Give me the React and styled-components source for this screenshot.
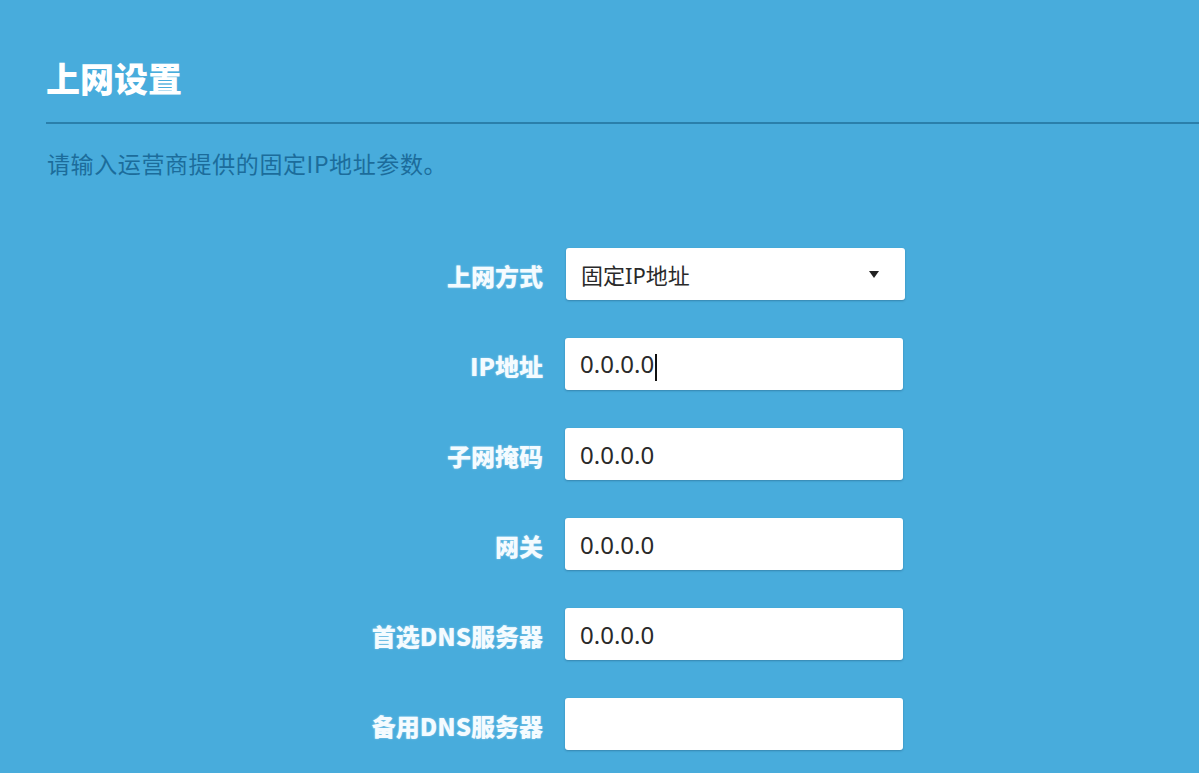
import React from "react";
import styled, { createGlobalStyle } from "styled-components";

const GlobalStyle = createGlobalStyle`
  html, body {
    margin: 0;
    padding: 0;
    background: #48acdc;
  }
  body {
    font-family: "Noto Sans", "Noto Sans CJK SC", sans-serif;
  }
`;

const Page = styled.div`
  width: 1199px;
  height: 773px;
  overflow: hidden;
  background: #48acdc;
  padding: 1px 0 0 46px;
  box-sizing: border-box;
`;

const Title = styled.h1`
  margin: 53px 0 0;
  font-family: "Noto Sans CJK SC", sans-serif;
  font-size: 34px;
  font-weight: 900;
  line-height: 48px;
  color: #ffffff;
`;

const Divider = styled.div`
  height: 2px;
  margin-top: 20px;
  background: #2a7fab;
`;

const Hint = styled.p`
  margin: 23px 0 0 1px;
  font-family: "Noto Sans CJK SC", sans-serif;
  font-size: 23px;
  line-height: 32px;
  color: #1c6c9b;
  letter-spacing: 0.6px;
`;

const Form = styled.div`
  display: grid;
  grid-template-columns: 497px 338px;
  grid-auto-rows: 52px;
  column-gap: 22px;
  row-gap: 38px;
  margin-top: 69px;
`;

const Label = styled.div`
  display: flex;
  align-items: center;
  justify-content: flex-end;
  font-family: "Noto Sans CJK SC", sans-serif;
  font-size: 24px;
  font-weight: 900;
  color: #f4fbff;
  text-shadow: 0 0 2px rgba(255, 255, 255, 0.45);
  padding-top: 2px;
`;

const Field = styled.div`
  display: flex;
  align-items: center;
  width: ${(p) => (p.$select ? "339px" : "338px")};
  margin-left: ${(p) => (p.$select ? "1px" : "0")};
  background: #ffffff;
  border-radius: 3px;
  box-shadow: 0 1px 2px rgba(20, 60, 90, 0.35);
  padding: 0 15px;
  box-sizing: border-box;
  font-family: "Noto Sans", "Noto Sans CJK SC", sans-serif;
  font-size: ${(p) => (p.$select ? "22px" : "24px")};
  color: #2a2a2a;
`;

const Value = styled.span`
  flex: 1;
  white-space: nowrap;
`;

const Caret = styled.span`
  display: inline-block;
  width: 2px;
  height: 27px;
  margin-left: 1px;
  vertical-align: middle;
  background: #111111;
`;

const Arrow = styled.span`
  width: 0;
  height: 0;
  border-left: 5px solid transparent;
  border-right: 5px solid transparent;
  border-top: 7px solid #222222;
  margin-right: 11px;
`;

const rows = [
  { label: "上网方式", value: "固定IP地址", select: true },
  { label: "IP地址", value: "0.0.0.0", caret: true },
  { label: "子网掩码", value: "0.0.0.0" },
  { label: "网关", value: "0.0.0.0" },
  { label: "首选DNS服务器", value: "0.0.0.0" },
  { label: "备用DNS服务器", value: "" },
];

export default function App() {
  return (
    <Page>
      <GlobalStyle />
      <Title>上网设置</Title>
      <Divider />
      <Hint>请输入运营商提供的固定IP地址参数。</Hint>
      <Form>
        {rows.map((r) => (
          <React.Fragment key={r.label}>
            <Label>{r.label}</Label>
            <Field $select={r.select}>
              <Value>
                {r.value}
                {r.caret && <Caret />}
              </Value>
              {r.select && <Arrow />}
            </Field>
          </React.Fragment>
        ))}
      </Form>
    </Page>
  );
}
